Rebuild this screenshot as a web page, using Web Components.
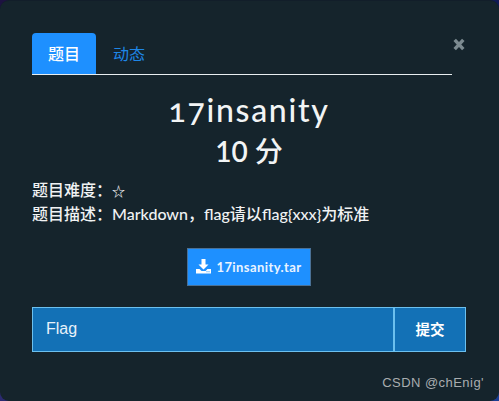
<!DOCTYPE html>
<html lang="zh"><head><meta charset="utf-8">
<style>
html,body{margin:0;height:100%;overflow:hidden}
body{width:499px;height:401px;font-family:Lato,"Noto Sans CJK SC",sans-serif;background:
 linear-gradient(#1d1240,#1d1240) 0 0/250px 200px no-repeat,
 linear-gradient(#101a55,#101a55) 100% 0/250px 200px no-repeat,
 linear-gradient(#2b2a70,#2b2a70) 0 100%/250px 201px no-repeat,
 linear-gradient(#1b3d92,#1b3d92) 100% 100%/250px 201px no-repeat}
</style></head><body>
<challenge-modal>
 <modal-tabs slot="tabs"></modal-tabs>
 <challenge-head slot="head" name="17insanity" score="分"></challenge-head>
 <challenge-info slot="info"></challenge-info>
 <download-button slot="file">17insanity.tar</download-button>
 <flag-form slot="form"></flag-form>
</challenge-modal>
<script>
function def(name,html){customElements.define(name,class extends HTMLElement{connectedCallback(){if(this.shadowRoot)return;const r=this.attachShadow({mode:'open'});r.innerHTML=typeof html==='function'?html(this):html;}});}
def('challenge-modal',`<style>
:host{display:block;box-sizing:border-box;width:499px;height:401px;background:#15242c;border-radius:9px;border-top:1px solid #121e2a;padding:32px 33px 0 32px;position:relative;color:#fff}
.x{position:absolute;left:453px;top:37px;width:12px;height:13px}
.tabs{display:block;margin-right:14px}
.sig{position:absolute;right:15px;bottom:10px;font:13px/16px "Liberation Sans",sans-serif;color:#a9adb0;letter-spacing:.45px}
</style><svg class="x" viewBox="0 0 12 13"><path d="M1.700 1.800 10.300 11.200M10.300 1.800 1.700 11.200" stroke="#7c8a90" stroke-width="3.400" fill="none"/></svg><div class="tabs"><slot name="tabs"></slot></div><slot name="head"></slot><slot name="info"></slot><slot name="file"></slot><slot name="form"></slot><span class="sig">CSDN @chEnig'</span>`);
def('modal-tabs',`<style>
:host{display:flex;height:41px;border-bottom:1px solid #e8eef0;font:500 16px/41px Lato,"Noto Sans CJK SC",sans-serif}
a{display:block;width:64px;text-align:center;border-radius:4px 4px 0 0}
.on{background:#1e90ff;color:#fff}
.off{color:#1e86e6;margin-left:1px;font-weight:400}
</style><a class="on">题目</a><a class="off">动态</a>`);
def('challenge-head',h=>`<style>
:host{display:block;text-align:center;padding-top:17px;height:81px;color:#f2f4f5}
.n{font:500 32px/36px Lato,sans-serif;font-variant-numeric:oldstyle-nums;letter-spacing:1.700px}
.s{font:500 28px/40px Lato,"Noto Sans CJK SC",sans-serif;margin-top:3px}
b{font-weight:600}
</style><div class="n">${h.getAttribute('name')}</div><div class="s"><b>10</b> ${h.getAttribute('score')}</div>`);
def('challenge-info',`<style>
:host{display:block;font:500 16px/24px Lato,"Noto Sans CJK SC",sans-serif;color:#f0f2f3;padding-top:5px}
div{height:24px;overflow:hidden;white-space:nowrap}
i{font:500 16px/24px Lato,"Noto Sans CJK SC",sans-serif}
.star{font-size:13px;line-height:24px}
</style><div>题目难度：<i class="star">☆</i></div><div>题目描述：<i>Markdown</i>，<i>flag</i>请以<i>flag{xxx}</i>为标准</div>`);
def('download-button',`<style>
:host{display:flex;box-sizing:border-box;width:124px;height:38px;margin:22px auto 0;background:#1e90ff;border:1px solid #4a7196;align-items:center;justify-content:center;gap:5px;color:#eaf4ff;font:700 13px/1 Lato,sans-serif;letter-spacing:.42px}
svg{width:15px;height:15px;flex:none;margin-top:-2px}
</style><svg viewBox="0 0 15 15"><path fill="#fff" fill-rule="evenodd" d="M5.500 0h4v5.500h3L7.500 10.500 2.500 5.500h3zM0 10h3.500l2 2h4l2-2H15v4.500H0zM10.500 12.300v1h1v-1zM12.500 12.300v1h1v-1z"/></svg><slot></slot>`);
def('flag-form',`<style>
:host{display:flex;box-sizing:border-box;width:434px;height:45px;margin-top:21px;background:#1371b6;border:1px solid #6cc0ee;color:#fff}
.i{flex:1;padding-left:13px;font:500 16px/41px "Liberation Sans","Noto Sans CJK SC",sans-serif;color:#e8f2fa}
.b{width:70px;border-left:2px solid #6cc0ee;text-align:center;font:700 14.500px/41px "Noto Sans CJK SC",sans-serif}
</style><div class="i">Flag</div><div class="b">提交</div>`);
</script>
</body></html>
